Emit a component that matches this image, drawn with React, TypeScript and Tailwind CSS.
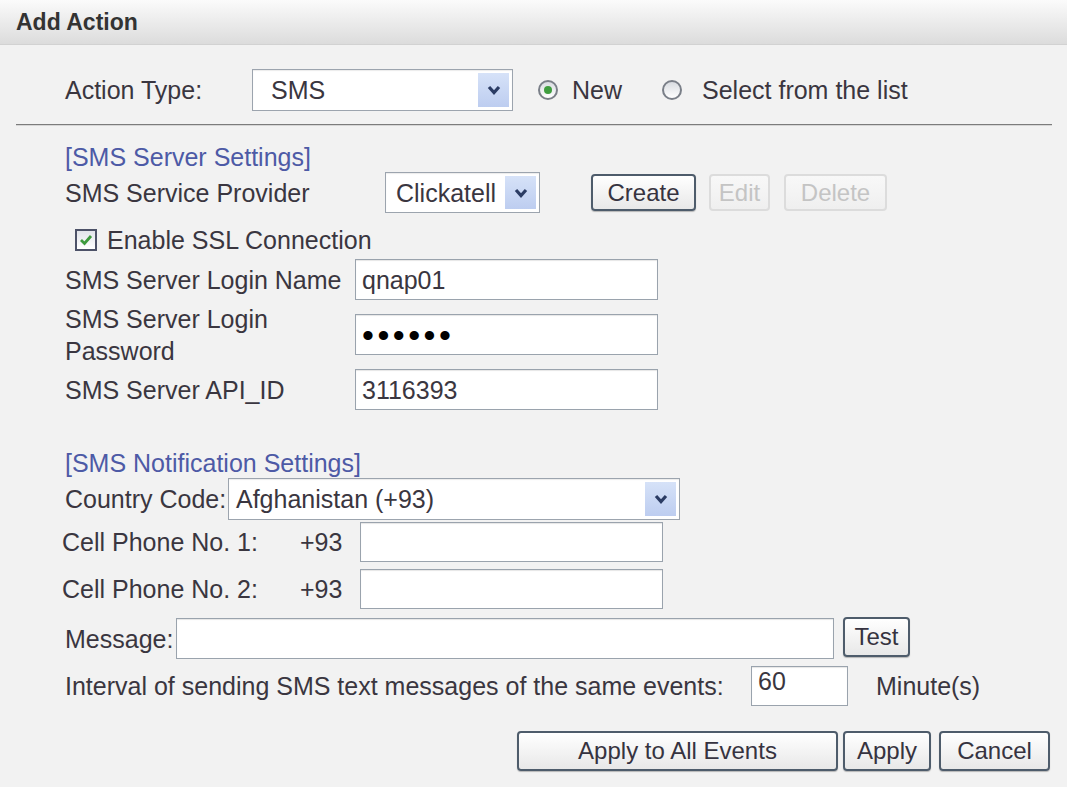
import React from "react";

const Chevron = () => (
  <svg width="14" height="10" viewBox="0 0 14 10">
    <polyline points="2,2 7,7.5 12,2" fill="none" stroke="#2b3c64" strokeWidth="3.2" />
  </svg>
);

interface SelectProps {
  value: string;
  className: string;
  pad: string;
}

function FakeSelect({ value, className, pad }: SelectProps) {
  return (
    <div className={`flex shrink-0 items-center border border-[#9ca4ae] bg-white shadow-[inset_0_1px_1px_rgba(0,0,0,0.08)] ${className}`}>
      <span className={`flex-1 whitespace-nowrap ${pad}`}>{value}</span>
      <div className="mr-[3px] flex h-[calc(100%-6px)] w-[31px] items-center justify-center bg-linear-to-b from-[#d6e2f8] to-[#bdcdf0]">
        <Chevron />
      </div>
    </div>
  );
}

function Input({ value, className, dots }: { value?: string; className: string; dots?: boolean }) {
  return (
    <div className={`flex shrink-0 items-center border border-[#9aa3ad] bg-white pl-[6px] shadow-[inset_0_1px_1px_rgba(0,0,0,0.1)] ${className}`}>
      {dots ? (
        <span className="text-[34px] leading-none tracking-[3.5px] text-black">••••••</span>
      ) : (
        <span>{value}</span>
      )}
    </div>
  );
}

function Button({ label, className, disabled }: { label: string; className: string; disabled?: boolean }) {
  return (
    <div
      className={`flex shrink-0 items-center justify-center rounded-[4px] border-2 bg-linear-to-b text-[24px] ${
        disabled
          ? "border-[#dcdcdc] from-[#f8f8f8] to-[#efefef] text-[#c4c4c4]"
          : "border-[#4e5c6b] from-[#ffffff] to-[#e8e8e8] text-[#363340] shadow-[0_1px_1px_rgba(0,0,0,0.25)]"
      } ${className}`}
    >
      {label}
    </div>
  );
}

function Radio({ checked }: { checked?: boolean }) {
  return (
    <div className="flex h-[20px] w-[20px] shrink-0 items-center justify-center rounded-full border-2 border-[#7a7f88] bg-linear-to-b from-[#d9dce1] to-[#ffffff]">
      {checked && <div className="h-[8px] w-[8px] rounded-full bg-[#3f9d3f]" />}
    </div>
  );
}

export default function App() {
  return (
    <div
      className="h-[787px] w-[1067px] overflow-hidden bg-[#f2f2f2] text-[25px] leading-[28px] text-[#3a3640]"
      style={{ fontFamily: '"Liberation Sans", Arial, sans-serif' }}
    >
      {/* header */}
      <div className="flex h-[45px] items-center border-b border-[#d2d2d2] bg-linear-to-b from-[#fbfbfb] to-[#dcdcdc] pl-[16px]">
        <span className="text-[23px] font-bold text-[#333]">Add Action</span>
      </div>

      {/* action type */}
      <div className="mt-[24px] flex items-center pl-[65px]">
        <span className="w-[187px]">Action Type:</span>
        <FakeSelect value="SMS" className="h-[42px] w-[261px]" pad="pl-[18px]" />
        <div className="ml-[25px]">
          <Radio checked />
        </div>
        <span className="ml-[14px]">New</span>
        <div className="ml-[40px]">
          <Radio />
        </div>
        <span className="ml-[20px]">Select from the list</span>
      </div>

      <div className="mx-[16px] mr-[15px] mt-[13px] h-[2px] border-t border-[#7c7c7c] bg-[#d6d6d6]" />

      <div className="pl-[65px]">
        {/* server settings */}
        <div className="mt-[17px] text-[#4d5aa6]">[SMS Server Settings]</div>
        <div className="mt-[1px] flex items-center">
          <span className="w-[320px]">SMS Service Provider</span>
          <FakeSelect value="Clickatell" className="h-[41px] w-[155px]" pad="pl-[10px]" />
          <Button label="Create" className="ml-[51px] h-[37px] w-[105px] border-[#3f4c5a]" />
          <Button label="Edit" disabled className="ml-[13px] h-[37px] w-[61px]" />
          <Button label="Delete" disabled className="ml-[14px] h-[37px] w-[103px]" />
        </div>

        <div className="mt-[13px] flex items-center pl-[10px]">
          <div className="flex h-[22px] w-[22px] shrink-0 items-center justify-center border-2 border-[#4d5268] bg-linear-to-b from-[#e2e4ea] to-[#ffffff]">
            <svg width="14" height="12" viewBox="0 0 14 12">
              <polyline points="2,6 5.5,9.5 12,2" fill="none" stroke="#3d9a3d" strokeWidth="2.8" />
            </svg>
          </div>
          <span className="ml-[10px]">Enable SSL Connection</span>
        </div>

        <div className="mt-[5px] flex items-center">
          <span className="w-[290px]">SMS Server Login Name</span>
          <Input value="qnap01" className="h-[41px] w-[303px]" />
        </div>
        <div className="mt-[14px] flex items-center">
          <div className="flex h-[41px] w-[290px] flex-col justify-center">
            <span className="leading-[32px]">
              SMS Server Login
              <br />
              Password
            </span>
          </div>
          <Input dots className="h-[41px] w-[303px]" />
        </div>
        <div className="mt-[14px] flex items-center">
          <span className="w-[290px]">SMS Server API_ID</span>
          <Input value="3116393" className="h-[41px] w-[303px]" />
        </div>

        {/* notification settings */}
        <div className="mt-[39px] text-[#4d5aa6]">[SMS Notification Settings]</div>
        <div className="mt-[1px] flex items-center">
          <span className="w-[163px]">Country Code:</span>
          <FakeSelect value="Afghanistan (+93)" className="h-[42px] w-[452px]" pad="pl-[7px]" />
        </div>
        <div className="-ml-[3px] mt-[2px] flex items-center">
          <span className="w-[238px]">Cell Phone No. 1:</span>
          <span className="w-[60px]">+93</span>
          <Input className="h-[40px] w-[303px]" />
        </div>
        <div className="-ml-[3px] mt-[7px] flex items-center">
          <span className="w-[238px]">Cell Phone No. 2:</span>
          <span className="w-[60px]">+93</span>
          <Input className="h-[40px] w-[303px]" />
        </div>
        <div className="mt-[9px] flex items-center">
          <span className="w-[111px]">Message:</span>
          <Input className="h-[41px] w-[658px]" />
          <Button label="Test" className="ml-[9px] -mt-[3px] h-[40px] w-[67px]" />
        </div>
        <div className="mt-[7px] flex items-center">
          <span className="w-[686px] whitespace-nowrap">Interval of sending SMS text messages of the same events:</span>
          <Input value="60" className="h-[40px] w-[97px] items-start" />
          <span className="ml-[28px]">Minute(s)</span>
        </div>
      </div>

      <div className="mt-[25px] flex justify-end pr-[17px]">
        <Button label="Apply to All Events" className="h-[40px] w-[321px]" />
        <Button label="Apply" className="ml-[5px] h-[40px] w-[88px]" />
        <Button label="Cancel" className="ml-[8px] h-[40px] w-[111px]" />
      </div>
    </div>
  );
}
